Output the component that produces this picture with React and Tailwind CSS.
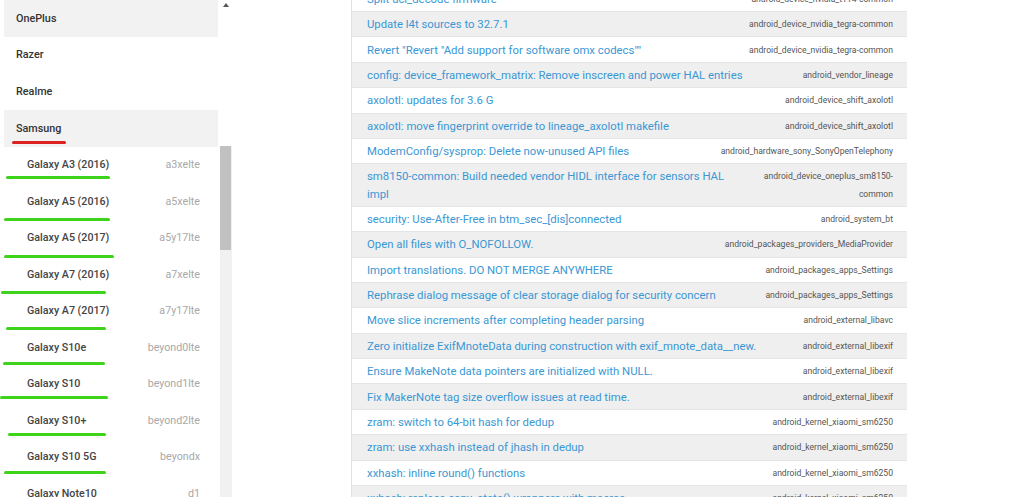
const BRANDS = [
  { name: "OnePlus", gray: true },
  { name: "Razer" },
  { name: "Realme" },
];

const DEVICES = [
  ["Galaxy A3 (2016)", "a3xelte"],
  ["Galaxy A5 (2016)", "a5xelte"],
  ["Galaxy A5 (2017)", "a5y17lte"],
  ["Galaxy A7 (2016)", "a7xelte"],
  ["Galaxy A7 (2017)", "a7y17lte"],
  ["Galaxy S10e", "beyond0lte"],
  ["Galaxy S10", "beyond1lte"],
  ["Galaxy S10+", "beyond2lte"],
  ["Galaxy S10 5G", "beyondx"],
  ["Galaxy Note10", "d1"],
];

// hand-drawn green marks under the device names: [top, left, width]
const MARKS = [
  [176, 6, 104],
  [218, 4, 106],
  [255, 4, 110],
  [291, 1, 105],
  [327, 6, 100],
  [362, 3, 102],
  [396, 0, 108],
  [433, 8, 98],
  [471, 4, 102],
];

const COMMITS = [
  ["Split ucl_decode firmware", ["android_device_nvidia_t114-common"]],
  ["Update l4t sources to 32.7.1", ["android_device_nvidia_tegra-common"]],
  ["Revert \"Revert \"Add support for software omx codecs\"\"", ["android_device_nvidia_tegra-common"]],
  ["config: device_framework_matrix: Remove inscreen and power HAL entries", ["android_vendor_lineage"]],
  ["axolotl: updates for 3.6 G", ["android_device_shift_axolotl"]],
  ["axolotl: move fingerprint override to lineage_axolotl makefile", ["android_device_shift_axolotl"]],
  ["ModemConfig/sysprop: Delete now-unused API files", ["android_hardware_sony_SonyOpenTelephony"]],
  [["sm8150-common: Build needed vendor HIDL interface for sensors HAL", "impl"], ["android_device_oneplus_sm8150-", "common"]],
  ["security: Use-After-Free in btm_sec_[dis]connected", ["android_system_bt"]],
  ["Open all files with O_NOFOLLOW.", ["android_packages_providers_MediaProvider"]],
  ["Import translations. DO NOT MERGE ANYWHERE", ["android_packages_apps_Settings"]],
  ["Rephrase dialog message of clear storage dialog for security concern", ["android_packages_apps_Settings"]],
  ["Move slice increments after completing header parsing", ["android_external_libavc"]],
  ["Zero initialize ExifMnoteData during construction with exif_mnote_data__new.", ["android_external_libexif"]],
  ["Ensure MakeNote data pointers are initialized with NULL.", ["android_external_libexif"]],
  ["Fix MakerNote tag size overflow issues at read time.", ["android_external_libexif"]],
  ["zram: switch to 64-bit hash for dedup", ["android_kernel_xiaomi_sm6250"]],
  ["zram: use xxhash instead of jhash in dedup", ["android_kernel_xiaomi_sm6250"]],
  ["xxhash: inline round() functions", ["android_kernel_xiaomi_sm6250"]],
  ["xxhash: replace copy_state() wrappers with macros", ["android_kernel_xiaomi_sm6250"]],
];

function Sidebar() {
  return (
    <div className="relative flex w-[232px] shrink-0">
      <div className="ml-[4px] w-[214px]">
        {BRANDS.map(b => (
          <div key={b.name}
            className={`flex h-[36.7px] items-center pl-[12px] pt-[1px] text-[10.8px] font-medium text-[#333] ${b.gray ? "bg-[#f2f2f2]" : "bg-white"}`}>
            {b.name}
          </div>
        ))}
        <div className="relative flex h-[36.5px] items-center bg-[#f2f2f2] pl-[12px] pt-[1px] text-[10.8px] font-medium text-[#333]">
          Samsung
          <div className="absolute left-[8px] top-[31px] h-[2.5px] w-[54px] rounded-full bg-[#dd2222]" />
        </div>
        {DEVICES.map(([name, code]) => (
          <div key={code} className="flex h-[36.5px] items-center justify-between bg-white pl-[23px] pr-[18px] pt-[1px] text-[10.7px]">
            <span className="font-medium text-[#444]">{name}</span>
            <span className="text-[#a8a8a8]">{code}</span>
          </div>
        ))}
      </div>

      {/* scrollbar */}
      <div className="ml-[2px] flex w-[12px] flex-col">
        <div className="flex h-[146px] justify-center pt-[3px]">
          <svg width="6" height="4" viewBox="0 0 6 4"><path d="M3 0 L6 4 L0 4 Z" fill="#555" /></svg>
        </div>
        <div className="flex-1 bg-[#f1f1f1]">
          <div className="h-[104px] w-[11px] bg-[#c1c1c1]" />
        </div>
      </div>

      {MARKS.map(([top, left, w], i) => (
        <div key={i} className="absolute h-[3px] rounded-full bg-[#3fd41c]"
          style={{ top, left, width: w }} />
      ))}
    </div>
  );
}

function CommitTable() {
  return (
    <div className="ml-[119px] mt-[-13.4px] w-[556px] border-l border-[#e2e2e2]">
      {COMMITS.map(([msg, repo], i) => {
        const lines = Array.isArray(msg) ? msg : [msg];
        const tall = lines.length > 1;
        return (
          <div key={i}
            className={`flex items-center justify-between border-b border-[#e4e4e4] pl-[15px] pr-[14px] ${tall ? "h-[42.4px]" : "h-[25.4px]"} ${i % 2 ? "bg-[#efefef]" : "bg-white"}`}>
            <div className="text-[11.35px] leading-[18px] text-[#3a97d4] whitespace-nowrap">
              {lines.map(l => <div key={l}>{l}</div>)}
            </div>
            <div className="text-right text-[8.6px] leading-[18px] text-[#555] whitespace-nowrap">
              {repo.map(r => <div key={r}>{r}</div>)}
            </div>
          </div>
        );
      })}
    </div>
  );
}

export default function App() {
  return (
    <div className="flex h-[497px] w-[1024px] overflow-hidden bg-white" style={{ fontFamily: "Roboto, 'Liberation Sans', sans-serif" }}>
      <Sidebar />
      <CommitTable />
    </div>
  );
}
